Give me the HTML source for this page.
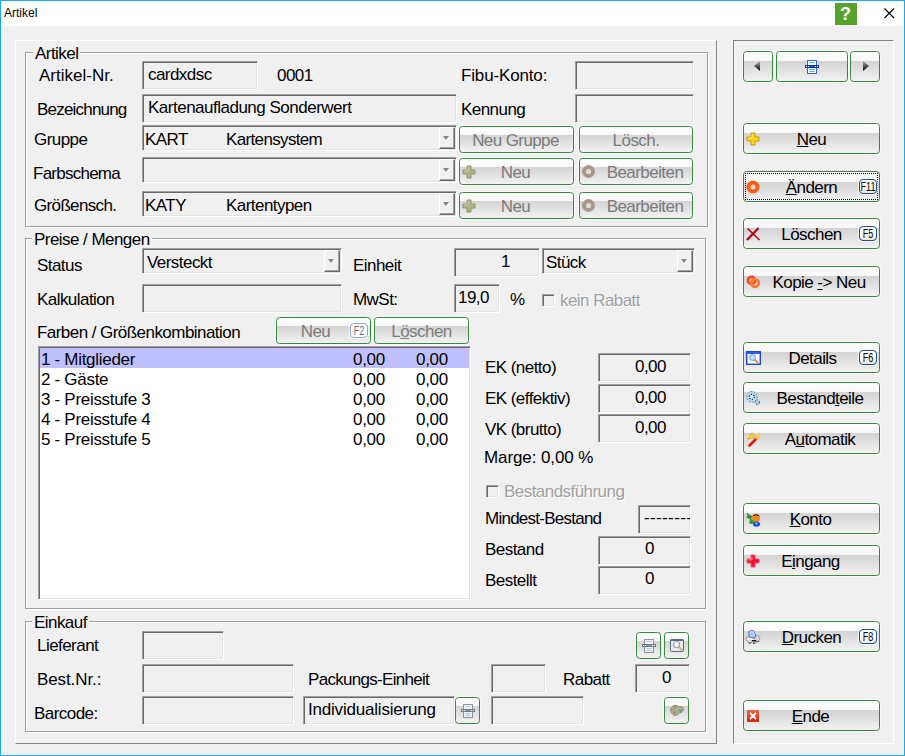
<!DOCTYPE html>
<html lang="de">
<head>
<meta charset="utf-8">
<title>Artikel</title>
<style>
html,body{margin:0;padding:0;}
body{width:905px;height:756px;overflow:hidden;background:#f0f0f0;font-family:"Liberation Sans",sans-serif;font-size:17px;letter-spacing:-0.55px;color:#000;position:relative;}
#win{position:absolute;left:0;top:0;width:905px;height:756px;background:#f0f0f0;overflow:hidden;}
#win *{box-sizing:border-box;}
#frame{position:absolute;left:0;top:0;width:905px;height:756px;border:1px solid #20a5f2;pointer-events:none;z-index:50;}
.a{position:absolute;}
#title{position:absolute;left:1px;top:1px;width:903px;height:25px;background:#fff;}
#title .t{position:absolute;left:3px;top:4px;font-size:12px;line-height:16px;letter-spacing:0;}
.l{position:absolute;white-space:pre;line-height:20px;height:20px;}
.dis{color:#a0a0a0;text-shadow:1px 1px 0 #fff;}
.in{position:absolute;border:1px solid;border-color:#a0a0a0 #fff #fff #a0a0a0;box-shadow:inset 1px 1px 0 #696969,inset -1px -1px 0 #e3e3e3;background:#f0f0f0;white-space:pre;overflow:hidden;line-height:20px;}
.in span{position:absolute;white-space:pre;}
.gb{position:absolute;border:1px solid #a0a0a0;box-shadow:1px 1px 0 #fff,inset 1px 1px 0 #fff;}
.lg{position:absolute;background:#f0f0f0;white-space:pre;line-height:20px;height:14px;padding:0 2px;}
.lg span{position:relative;top:-2px;}
.b{position:absolute;border:1px solid #348a3c;border-radius:3.5px;background:linear-gradient(to bottom,#fff 0,#f7f7f7 31%,#d3d3d3 31.5%,#f2f2f2 100%);box-shadow:0 0 0 1px rgba(255,255,255,.6);white-space:pre;line-height:20px;}
.b .tx{position:absolute;left:0;right:0;text-align:center;}
.b.g{color:#7c7c7c;}
.fk{position:absolute;width:18px;height:15px;border:1px solid #1f4e8e;border-radius:4px;background:linear-gradient(to bottom,#fff 30%,#ece8dc 100%);font-size:12.5px;line-height:13px;text-align:center;color:#000;letter-spacing:0;box-shadow:0 0 0 1px rgba(255,255,255,.7);overflow:visible;}
.fk span{position:absolute;left:50%;top:1px;white-space:nowrap;transform:translateX(-50%) scaleX(.72);}
.fk.g{border-color:#8ea9c9;color:#686868;background:#fff;}
.db{position:absolute;width:16px;border:1px solid;border-color:#fff #696969 #696969 #fff;box-shadow:inset -1px -1px 0 #a0a0a0;background:#f0f0f0;}
.db i{position:absolute;left:3px;top:8px;width:0;height:0;border-left:3.5px solid transparent;border-right:3.5px solid transparent;border-top:4px solid #848484;filter:drop-shadow(1px 1px 0 #fff);}
.cb{position:absolute;width:13px;height:13px;border:1px solid;border-color:#a0a0a0 #fff #fff #a0a0a0;box-shadow:inset 1px 1px 0 #696969,inset -1px -1px 0 #e3e3e3;background:#f0f0f0;}
u{text-decoration:underline;text-underline-offset:1px;text-decoration-thickness:1px;}
.foc{position:absolute;left:1px;top:1px;right:1px;bottom:1px;background:repeating-linear-gradient(90deg,#000 0 1px,transparent 1px 2px) left top/100% 1px no-repeat,repeating-linear-gradient(90deg,#000 0 1px,transparent 1px 2px) left bottom/100% 1px no-repeat,repeating-linear-gradient(180deg,#000 0 1px,transparent 1px 2px) left top/1px 100% no-repeat,repeating-linear-gradient(180deg,#000 0 1px,transparent 1px 2px) right top/1px 100% no-repeat;}
svg{position:absolute;overflow:visible;}
</style>
</head>
<body>
<div id="win">
<div id="frame"></div><div class="a" style="left:1px;top:754px;width:903px;height:1px;background:#f9efea;"></div><div class="a" style="left:903px;top:26px;width:1px;height:729px;background:#f9efea;"></div><div class="a" style="left:1px;top:26px;width:1px;height:729px;background:#f9efea;"></div>
<div id="title"><div class="t">Artikel</div>
<div class="a" style="left:834px;top:2px;width:22px;height:22px;background:#55a22f;color:#fff;font-weight:bold;font-size:18px;line-height:23px;text-align:center;letter-spacing:0;text-indent:-1px;">?</div>
<svg style="left:883px;top:7px" width="11" height="11" viewBox="0 0 11 11"><path d="M0.5 0.5 L10 10 M10 0.5 L0.5 10" stroke="#000" stroke-width="1.1" fill="none"/></svg>
</div>
<!-- left raised panel 15..716 x 40..743 -->
<div class="a" style="left:15px;top:40px;width:702px;height:704px;border:1px solid;border-color:#fff #868686 #868686 #fff;"></div>
<!-- right sunken panel 733..893 x 40..743 -->
<div class="a" style="left:733px;top:40px;width:161px;height:704px;border:1px solid;border-color:#868686 #fff #fff #868686;"></div>
<!-- ===== Artikel group ===== -->
<div class="gb" style="left:25px;top:52px;width:683px;height:175px;"></div>
<div class="lg" style="left:33px;top:46px;"><span>Artikel</span></div>

<div class="l" style="left:39px;top:66px;letter-spacing:0px;">Artikel-Nr.</div>
<div class="in" style="left:142px;top:61px;width:116px;height:29px;"><span style="left:5px;top:3px;">cardxdsc</span></div>
<div class="l" style="left:277px;top:66px;">0001</div>
<div class="l" style="left:461px;top:66px;letter-spacing:-0.15px;">Fibu-Konto:</div>
<div class="in" style="left:575px;top:61px;width:119px;height:29px;"></div>

<div class="l" style="left:37px;top:100px;letter-spacing:-0.8px;">Bezeichnung</div>
<div class="in" style="left:142px;top:94px;width:315px;height:29px;"><span style="left:5px;top:3px;letter-spacing:-0.5px;">Kartenaufladung Sonderwert</span></div>
<div class="l" style="left:461px;top:100px;">Kennung</div>
<div class="in" style="left:575px;top:94px;width:119px;height:29px;"></div>

<div class="l" style="left:34px;top:130px;">Gruppe</div>
<div class="in" style="left:142px;top:125px;width:315px;height:26px;"><span style="left:2px;top:4px;">KART</span><span style="left:83px;top:4px;letter-spacing:-0.65px;">Kartensystem</span><div class="db" style="left:296px;top:1px;height:22px;"><i></i></div></div>
<div class="b g" style="left:459px;top:126px;width:115px;height:27px;"><span class="tx" style="top:4px;left:-2px;letter-spacing:-0.6px;">Neu Gruppe</span></div>
<div class="b g" style="left:579px;top:126px;width:114px;height:27px;"><span class="tx" style="top:4px;">Lösch.</span></div>

<div class="l" style="left:33px;top:164px;letter-spacing:-0.75px;">Farbschema</div>
<div class="in" style="left:142px;top:157px;width:315px;height:26px;"><div class="db" style="left:296px;top:1px;height:22px;"><i></i></div></div>
<div class="b g" style="left:459px;top:158px;width:115px;height:27px;"><svg style="left:2px;top:6px" width="14" height="14" viewBox="0 0 14 14"><path d="M5 1h4v4h4v4H9v4H5V9H1V5h4z" fill="#b3b188" stroke="#96936c" stroke-width="1" stroke-linejoin="round"/><path d="M6 2.500v3.500H2.500" fill="none" stroke="#cfcdb0" stroke-width="1"/></svg><span class="tx" style="top:4px;left:-2px;">Neu</span></div>
<div class="b g" style="left:579px;top:158px;width:114px;height:27px;"><svg style="left:2px;top:6px" width="14" height="14" viewBox="0 0 14 14"><circle cx="6.500" cy="6.500" r="4.500" fill="none" stroke="#a89888" stroke-width="3.800"/></svg><span class="tx" style="top:4px;left:18px;">Bearbeiten</span></div>

<div class="l" style="left:34px;top:196px;letter-spacing:-0.65px;">Größensch.</div>
<div class="in" style="left:142px;top:191px;width:315px;height:26px;"><span style="left:2px;top:4px;">KATY</span><span style="left:83px;top:4px;">Kartentypen</span><div class="db" style="left:296px;top:1px;height:22px;"><i></i></div></div>
<div class="b g" style="left:459px;top:192px;width:115px;height:27px;"><svg style="left:2px;top:6px" width="14" height="14" viewBox="0 0 14 14"><path d="M5 1h4v4h4v4H9v4H5V9H1V5h4z" fill="#b3b188" stroke="#96936c" stroke-width="1" stroke-linejoin="round"/><path d="M6 2.500v3.500H2.500" fill="none" stroke="#cfcdb0" stroke-width="1"/></svg><span class="tx" style="top:4px;left:-2px;">Neu</span></div>
<div class="b g" style="left:579px;top:192px;width:114px;height:27px;"><svg style="left:2px;top:6px" width="14" height="14" viewBox="0 0 14 14"><circle cx="6.500" cy="6.500" r="4.500" fill="none" stroke="#a89888" stroke-width="3.800"/></svg><span class="tx" style="top:4px;left:18px;">Bearbeiten</span></div>

<!-- ===== Preise / Mengen group ===== -->
<div class="gb" style="left:25px;top:238px;width:681px;height:371px;"></div>
<div class="lg" style="left:32px;top:232px;"><span>Preise / Mengen</span></div>

<div class="l" style="left:37px;top:256px;">Status</div>
<div class="in" style="left:142px;top:248px;width:200px;height:26px;"><span style="left:4px;top:4px;">Versteckt</span><div class="db" style="left:181px;top:1px;height:22px;"><i></i></div></div>
<div class="l" style="left:353px;top:256px;">Einheit</div>
<div class="in" style="left:454px;top:248px;width:86px;height:29px;"><span style="left:46px;top:3px;">1</span></div>
<div class="in" style="left:542px;top:248px;width:153px;height:26px;"><span style="left:3px;top:4px;">Stück</span><div class="db" style="left:134px;top:1px;height:22px;"><i></i></div></div>

<div class="l" style="left:37px;top:290px;">Kalkulation</div>
<div class="in" style="left:142px;top:284px;width:200px;height:29px;"></div>
<div class="l" style="left:353px;top:290px;">MwSt:</div>
<div class="in" style="left:454px;top:284px;width:46px;height:29px;"><span style="left:3px;top:3px;">19,0</span></div>
<div class="l" style="left:510px;top:290px;">%</div>
<div class="cb" style="left:542px;top:294px;"></div>
<div class="l dis" style="left:560px;top:291px;">kein Rabatt</div>

<div class="l" style="left:37px;top:323px;">Farben / Größenkombination</div>
<div class="b g" style="left:276px;top:317px;width:95px;height:27px;"><span class="tx" style="top:4px;left:-16px;">Neu</span><div class="fk g" style="left:73px;top:5px;"><span>F2</span></div></div>
<div class="b g" style="left:374px;top:317px;width:95px;height:27px;"><span class="tx" style="top:4px;">L<u>ö</u>schen</span></div>

<!-- list box -->
<div class="a" style="left:38px;top:346px;width:433px;height:254px;border:1px solid;border-color:#a0a0a0 #fff #fff #a0a0a0;box-shadow:inset 1px 1px 0 #696969,inset -1px -1px 0 #e3e3e3;background:#fff;overflow:hidden;">
<div class="a" style="left:1px;top:1px;width:429px;height:20px;background:#c0c0ff;"></div>
<div class="l" style="left:2px;top:3px;letter-spacing:-0.3px;">1 - Mitglieder</div><div class="l" style="left:314px;top:3px;letter-spacing:-0.3px;">0,00</div><div class="l" style="left:377px;top:3px;letter-spacing:-0.3px;">0,00</div>
<div class="l" style="left:2px;top:23px;letter-spacing:-0.3px;">2 - Gäste</div><div class="l" style="left:314px;top:23px;letter-spacing:-0.3px;">0,00</div><div class="l" style="left:377px;top:23px;letter-spacing:-0.3px;">0,00</div>
<div class="l" style="left:2px;top:43px;letter-spacing:-0.3px;">3 - Preisstufe 3</div><div class="l" style="left:314px;top:43px;letter-spacing:-0.3px;">0,00</div><div class="l" style="left:377px;top:43px;letter-spacing:-0.3px;">0,00</div>
<div class="l" style="left:2px;top:63px;letter-spacing:-0.3px;">4 - Preisstufe 4</div><div class="l" style="left:314px;top:63px;letter-spacing:-0.3px;">0,00</div><div class="l" style="left:377px;top:63px;letter-spacing:-0.3px;">0,00</div>
<div class="l" style="left:2px;top:83px;letter-spacing:-0.3px;">5 - Preisstufe 5</div><div class="l" style="left:314px;top:83px;letter-spacing:-0.3px;">0,00</div><div class="l" style="left:377px;top:83px;letter-spacing:-0.3px;">0,00</div>
</div>

<div class="l" style="left:485px;top:358px;">EK (netto)</div>
<div class="in" style="left:598px;top:353px;width:93px;height:29px;"><span style="left:36px;top:3px;">0,00</span></div>
<div class="l" style="left:485px;top:389px;">EK (effektiv)</div>
<div class="in" style="left:598px;top:384px;width:93px;height:29px;"><span style="left:36px;top:3px;">0,00</span></div>
<div class="l" style="left:485px;top:420px;">VK (brutto)</div>
<div class="in" style="left:598px;top:414px;width:93px;height:29px;"><span style="left:36px;top:3px;">0,00</span></div>
<div class="l" style="left:484px;top:448px;letter-spacing:-0.1px;">Marge: 0,00 %</div>

<div class="cb" style="left:486px;top:485px;"></div>
<div class="l dis" style="left:504px;top:482px;">Bestandsführung</div>
<div class="l" style="left:485px;top:509px;letter-spacing:-0.75px;">Mindest-Bestand</div>
<div class="in" style="left:638px;top:505px;width:53px;height:29px;"><span style="left:5px;top:2px;letter-spacing:0.37px;">---------</span></div>
<div class="l" style="left:485px;top:540px;">Bestand</div>
<div class="in" style="left:598px;top:536px;width:93px;height:29px;"><span style="left:46px;top:2px;">0</span></div>
<div class="l" style="left:485px;top:571px;">Bestellt</div>
<div class="in" style="left:598px;top:566px;width:93px;height:29px;"><span style="left:46px;top:2px;">0</span></div>

<!-- ===== Einkauf group ===== -->
<div class="gb" style="left:25px;top:621px;width:681px;height:111px;"></div>
<div class="lg" style="left:32px;top:615px;"><span>Einkauf</span></div>

<div class="l" style="left:37px;top:636px;">Lieferant</div>
<div class="in" style="left:142px;top:631px;width:82px;height:29px;"></div>
<div class="l" style="left:37px;top:670px;letter-spacing:-0.1px;">Best.Nr.:</div>
<div class="in" style="left:142px;top:664px;width:152px;height:29px;"></div>
<div class="l" style="left:34px;top:704px;">Barcode:</div>
<div class="in" style="left:142px;top:696px;width:152px;height:29px;"></div>
<div class="l" style="left:308px;top:670px;letter-spacing:-0.7px;">Packungs-Einheit</div>
<div class="in" style="left:303px;top:696px;width:152px;height:29px;"><span style="left:4px;top:3px;letter-spacing:-0.2px;">Individualisierung</span></div>
<div class="b" style="left:455px;top:697px;width:25px;height:27px;"><svg style="left:5px;top:6px" width="14" height="14" viewBox="0 0 14 14"><rect x="2.500" y="0.500" width="9" height="13" fill="#eef1f3" stroke="#8e969c"/><path d="M4.500 2.500h5M4.500 9.500h5M4.500 11.500h5" stroke="#b8c6d4" stroke-width="1"/><rect x="0" y="5" width="14" height="3" fill="#6f7b84"/><path d="M1 6.500h12" stroke="#8c98a4" stroke-width="1"/><path d="M1 6.500h1M3 6.500h1M10 6.500h1M12 6.500h1" stroke="#fff" stroke-width="1"/></svg></div>
<div class="in" style="left:491px;top:664px;width:55px;height:29px;"></div>
<div class="in" style="left:491px;top:696px;width:93px;height:29px;"></div>
<div class="l" style="left:563px;top:670px;">Rabatt</div>
<div class="in" style="left:635px;top:664px;width:55px;height:29px;"><span style="left:26px;top:3px;">0</span></div>
<div class="b" style="left:636px;top:632px;width:25px;height:27px;"><svg style="left:5px;top:6px" width="14" height="14" viewBox="0 0 14 14"><rect x="2.500" y="0.500" width="9" height="13" fill="#eef1f3" stroke="#8e969c"/><path d="M4.500 2.500h5M4.500 9.500h5M4.500 11.500h5" stroke="#b8c6d4" stroke-width="1"/><rect x="0" y="5" width="14" height="3" fill="#6f7b84"/><path d="M1 6.500h12" stroke="#8c98a4" stroke-width="1"/><path d="M1 6.500h1M3 6.500h1M10 6.500h1M12 6.500h1" stroke="#fff" stroke-width="1"/></svg></div>
<div class="b" style="left:664px;top:632px;width:25px;height:27px;"><svg style="left:5px;top:6px" width="14" height="13" viewBox="0 0 14 13"><rect x="0.500" y="0.500" width="13" height="12" rx="1" fill="#e6eaea" stroke="#5e6e7e"/><rect x="0.500" y="0.500" width="13" height="1.500" fill="#5e6e7e"/><circle cx="6.500" cy="5.500" r="3" fill="#fafcfc" stroke="#98a4ac" stroke-width="1.200"/><path d="M8.800 7.800l3.400 3.400" stroke="#c4b494" stroke-width="1.800" stroke-linecap="round"/></svg></div>
<div class="b" style="left:664px;top:697px;width:25px;height:27px;"><svg style="left:5px;top:7px" width="14" height="12" viewBox="0 0 14 12"><path d="M4.500 0.500c1.800-.4 3.400-.2 3.600 1.400c2-1 5.400-.2 5.400 2.300c0 2-2 3-4 4c-1.500 1-2.700 2.300-4.300 2.300c-2 0-3.200-2-4.200-3.500c-1-1.800-.4-3.400.6-4.700c.8-1.200 1.700-1.600 2.900-1.800z" fill="#b6ae8a" stroke="#726e4c" stroke-width=".8" stroke-dasharray="1.400 .5"/><circle cx="5.200" cy="2.300" r="1.100" fill="#6e9c78"/><circle cx="2.700" cy="4.700" r="1.200" fill="#cc8c8c"/><ellipse cx="10.600" cy="5.500" rx="1.800" ry="1.300" fill="#6c98c8"/><circle cx="4.300" cy="7.600" r="1.300" fill="#7c8cb4"/><circle cx="8" cy="7.600" r="1.100" fill="#98b070"/></svg></div>

<!-- ===== Right button panel ===== -->
<div class="b" style="left:743px;top:51px;width:30px;height:31px;"><svg style="left:9px;top:8px" width="8" height="12" viewBox="0 0 8 12"><defs><linearGradient id="ga" x1="0" y1="0" x2="0" y2="1"><stop offset="0" stop-color="#b0b0b0"/><stop offset="1" stop-color="#000"/></linearGradient></defs><path d="M7 1v10L1 6z" fill="url(#ga)"/></svg></div>
<div class="b" style="left:776px;top:51px;width:72px;height:31px;"><svg style="left:28px;top:8px" width="14" height="14" viewBox="0 0 14 14"><rect x="2.500" y="0.500" width="9" height="13" fill="#eaffff" stroke="#3f62c0"/><path d="M4.500 2.500h5M4.500 9.500h5M4.500 11.500h5" stroke="#58a8ff" stroke-width="1"/><rect x="0" y="5" width="14" height="3" fill="#0c2c8c"/><path d="M1 6.500h12" stroke="#2456e4" stroke-width="1"/><path d="M1 6.500h1M3 6.500h1M10 6.500h1M12 6.500h1" stroke="#fff" stroke-width="1"/></svg></div>
<div class="b" style="left:850px;top:51px;width:30px;height:31px;"><svg style="left:11px;top:8px" width="8" height="12" viewBox="0 0 8 12"><path d="M1 1v10L7 6z" fill="url(#ga)"/></svg></div>

<div class="b" style="left:743px;top:123px;width:137px;height:31px;"><svg style="left:2px;top:8px" width="14" height="14" viewBox="0 0 14 14"><path d="M5 1h4v4h4v4H9v4H5V9H1V5h4z" fill="#ffd61c" stroke="#c8980c" stroke-width="1" stroke-linejoin="round"/><path d="M6 2.500v3.500H2.500" fill="none" stroke="#fff090" stroke-width="1"/></svg><span class="tx" style="top:6px;"><u>N</u>eu</span></div>

<div class="b" style="left:743px;top:171px;width:137px;height:31px;border-color:#3c7c44;background:linear-gradient(to bottom,#fff 0,#f7f7f7 34.5%,#d3d3d3 35%,#f2f2f2 100%);"><div class="foc"></div><svg style="left:2px;top:8px" width="14" height="14" viewBox="0 0 14 14"><circle cx="7" cy="7" r="4.500" fill="none" stroke="#ff5c14" stroke-width="4"/></svg><span class="tx" style="top:6px;"><u>Ä</u>ndern</span><div class="fk" style="left:115px;top:7px;"><span>F11</span></div></div>

<div class="b" style="left:743px;top:218px;width:137px;height:31px;"><svg style="left:2px;top:8px" width="15" height="14" viewBox="0 0 15 14"><path d="M1.500 1.500L13.500 13" stroke="#c00010" stroke-width="1.600" fill="none"/><path d="M12.500 1L1 13" stroke="#b00010" stroke-width="2.200" fill="none"/></svg><span class="tx" style="top:6px;">Löschen</span><div class="fk" style="left:115px;top:7px;"><span>F5</span></div></div>

<div class="b" style="left:743px;top:266px;width:137px;height:31px;"><svg style="left:2px;top:8px" width="15" height="14" viewBox="0 0 15 14"><circle cx="5.500" cy="5.500" r="3.600" fill="none" stroke="#f04818" stroke-width="2.600"/><circle cx="9" cy="8" r="3.800" fill="none" stroke="#ff7838" stroke-width="2.800"/></svg><span class="tx" style="top:6px;left:15px;">Kopie <u>-</u>&gt; Neu</span></div>

<div class="b" style="left:743px;top:342px;width:137px;height:31px;"><svg style="left:2px;top:8px" width="15" height="14" viewBox="0 0 15 14"><rect x="0.700" y="0.700" width="13.600" height="12.600" fill="#fff" stroke="#1c44e0" stroke-width="1.400"/><rect x="1" y="1" width="13" height="2" fill="#2c5cf0"/><circle cx="6.500" cy="6.500" r="3" fill="#b8e0ff" stroke="#6c9cd0"/><path d="M8.800 8.800l3.200 3.200" stroke="#e08020" stroke-width="1.800"/></svg><span class="tx" style="top:6px;left:2px;">Details</span><div class="fk" style="left:115px;top:7px;"><span>F6</span></div></div>

<div class="b" style="left:743px;top:382px;width:137px;height:31px;"><svg style="left:2px;top:8px" width="15" height="15" viewBox="0 0 15 15"><path d="M8.500 8.500l2.500 2.500" stroke="#b0d4f0" stroke-width="3"/><circle cx="11.200" cy="11.200" r="2.300" fill="#b4d2ea" stroke="#283848" stroke-width="1" stroke-dasharray="1.300 1.700"/><circle cx="5.800" cy="5.800" r="4.100" fill="#e4e8ec" stroke="#b2d8f4" stroke-width="3.200"/><circle cx="5.800" cy="5.800" r="5.300" fill="none" stroke="#34465c" stroke-width="1" stroke-dasharray="1 2.300" opacity=".9"/><circle cx="5.800" cy="5.800" r="2.500" fill="none" stroke="#141c24" stroke-width="1.100" stroke-dasharray="1.300 1.320"/></svg><span class="tx" style="top:6px;left:17px;">Bestand<u>t</u>eile</span></div>

<div class="b" style="left:743px;top:423px;width:137px;height:31px;"><svg style="left:2px;top:8px" width="15" height="15" viewBox="0 0 15 15"><path d="M3.500 13.500L12 5" stroke="#d02010" stroke-width="2.600" stroke-linecap="round"/><path d="M10.800 6.200L13 4" stroke="#ffd030" stroke-width="2.600" stroke-linecap="round"/><path d="M6 0.500l1 2.200 2.300.2-1.700 1.600.5 2.300L6 5.600 3.900 6.800l.5-2.300L2.700 2.900 5 2.700z" fill="#ffd020" stroke="#c89010" stroke-width=".5"/><path d="M1 6.500h3M2.500 5v3" stroke="#e8b020" stroke-width="1"/></svg><span class="tx" style="top:6px;left:17px;">A<u>u</u>tomatik</span></div>

<div class="b" style="left:743px;top:503px;width:137px;height:31px;"><svg style="left:2px;top:9px" width="15" height="14" viewBox="0 0 15 14"><path d="M1 0.500l1.500 3L0.500 4l5 3-1-2.500 2-.5z" fill="#20a020" stroke="#106010" stroke-width=".6"/><circle cx="10" cy="5" r="4" fill="#f08818"/><path d="M6.500 3.500c1-3 6-3 7 0c-2-1.500-5-1.500-7 0z" fill="#302010"/><ellipse cx="10.500" cy="11" rx="3.500" ry="2.600" fill="#1848e0"/><ellipse cx="5.500" cy="9" rx="2.400" ry="2" fill="#18a030"/><circle cx="10.500" cy="10.500" r="1" fill="#c8d8ff"/></svg><span class="tx" style="top:6px;left:-2px;"><u>K</u>onto</span></div>

<div class="b" style="left:743px;top:545px;width:137px;height:31px;"><svg style="left:2px;top:8px" width="14" height="14" viewBox="0 0 14 14"><path d="M5 1h4v4h4v4H9v4H5V9H1V5h4z" fill="#ee1030" stroke="#f8506c" stroke-width="1" stroke-linejoin="round"/><path d="M6 2.500v3.500H2.500" fill="none" stroke="#ff8c9c" stroke-width="1"/></svg><span class="tx" style="top:6px;left:-2px;">E<u>i</u>ngang</span></div>

<div class="b" style="left:743px;top:621px;width:137px;height:31px;"><svg style="left:1px;top:7px" width="16" height="15" viewBox="0 0 16 15"><path d="M1 9.500C1 8 3 7 5 7.200L11.500 6.500C14 6.500 15.200 8 14.600 10.300L13 12.800L4.500 13.800C2.500 13 1 11.200 1 9.500z" fill="#d8dada" stroke="#6c7474" stroke-width=".9" stroke-dasharray="2 .6"/><path d="M3.600 2.900L5.800 1.600l2.700.1L11 6.400l-1.300 2.300L4.400 8.400z" fill="#a2cafa" stroke="#5a68c8" stroke-width=".9"/><path d="M5.200 3.400l1.600-.7 1.500.3 1.300 3" fill="none" stroke="#cfe6ff" stroke-width="1"/><path d="M4.200 8.600c2 1 5 1 6.600.2" fill="none" stroke="#9a9e9e" stroke-width="1"/><path d="M2.500 10.200C4 9.400 6 9.800 8 10.800" fill="none" stroke="#fff" stroke-width="1.500"/><path d="M6.800 11.700h4.400" stroke="#0c0c0c" stroke-width="1.400"/><path d="M3.800 14.200h2.200M8 14.400h2.200M11.500 12.500h2.500" stroke="#545c5c" stroke-width="1"/></svg><span class="tx" style="top:6px;"><u>D</u>rucken</span><div class="fk" style="left:115px;top:7px;"><span>F8</span></div></div>

<div class="b" style="left:743px;top:700px;width:137px;height:31px;"><svg style="left:3px;top:9px" width="12" height="12" viewBox="0 0 12 12"><defs><linearGradient id="gr" x1="0" y1="0" x2="0" y2="1"><stop offset="0" stop-color="#f06848"/><stop offset="1" stop-color="#d02810"/></linearGradient></defs><rect x="0" y="0" width="12" height="12" fill="url(#gr)"/><path d="M3 3l6 6M9 3l-6 6" stroke="#fff" stroke-width="1.800"/></svg><span class="tx" style="top:6px;left:-2px;"><u>E</u>nde</span></div>

</div>
</body>
</html>
